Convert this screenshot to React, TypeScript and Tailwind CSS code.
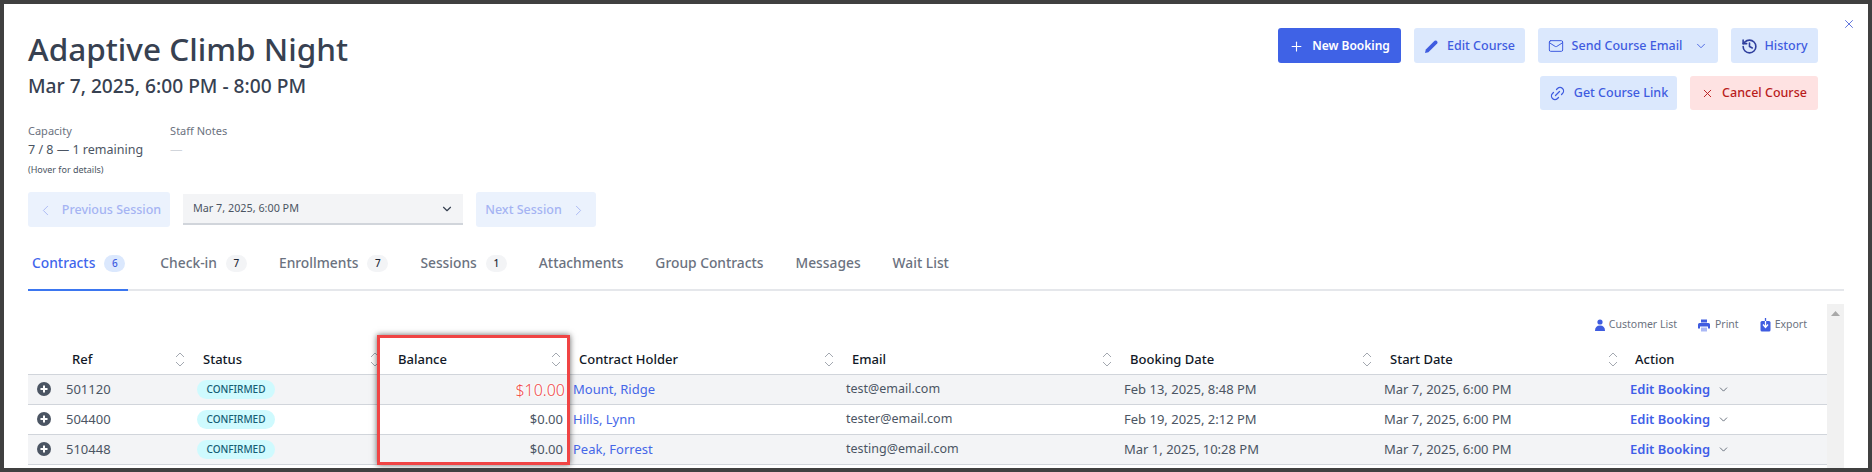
import React from "react";
import { Plus, Mail, ChevronDown, ChevronLeft, ChevronRight, History, Link2, X } from "lucide-react";

const font = { fontFamily: '"Noto Sans", sans-serif' };

function Btn({ w, h = "h-[35px]", className, children }: { w: string; h?: string; className: string; children: React.ReactNode }) {
  return <div className={`${w} ${h} flex items-center justify-center gap-[8px] rounded-[3px] pt-[1px] text-[12.5px] font-medium ${className}`}>{children}</div>;
}

function Sort() {
  return (
    <svg width="10" height="15" viewBox="0 0 10 15" fill="none" stroke="#a3a8b0" strokeWidth="1" className="absolute right-[7px] top-[6px]">
      <path d="M1 5 L5 1 L9 5" />
      <path d="M1 10 L5 14 L9 10" />
    </svg>
  );
}

function PlusDot() {
  return (
    <svg width="14" height="14" viewBox="0 0 14 14">
      <circle cx="7" cy="7" r="7" fill="#4b5563" />
      <path d="M7 3.5 V10.5 M3.5 7 H10.5" stroke="#fff" strokeWidth="2" />
    </svg>
  );
}

const rows = [
  { ref: "501120", bal: "$10.00", name: "Mount, Ridge", email: "test@email.com", book: "Feb 13, 2025, 8:48 PM" },
  { ref: "504400", bal: "$0.00", name: "Hills, Lynn", email: "tester@email.com", book: "Feb 19, 2025, 2:12 PM" },
  { ref: "510448", bal: "$0.00", name: "Peak, Forrest", email: "testing@email.com", book: "Mar 1, 2025, 10:28 PM" },
];

const heads = [
  { t: "Ref", w: "w-[131px]" },
  { t: "Status", w: "w-[195px]" },
  { t: "Balance", w: "w-[181px]" },
  { t: "Contract Holder", w: "w-[273px]" },
  { t: "Email", w: "w-[278px]" },
  { t: "Booking Date", w: "w-[260px]" },
  { t: "Start Date", w: "w-[246px]" },
];

const tabs = [
  { t: "Contracts", b: "6", active: true },
  { t: "Check-in", b: "7" },
  { t: "Enrollments", b: "7" },
  { t: "Sessions", b: "1" },
  { t: "Attachments" },
  { t: "Group Contracts" },
  { t: "Messages" },
  { t: "Wait List" },
];

export default function App() {
  return (
    <div style={font} className="relative h-[472px] w-[1872px] overflow-hidden border-4 border-[#404040] bg-white px-[24px] pt-[24px]">
      <X className="absolute right-[12px] top-[13px] text-[#4a63d8]" size={14} strokeWidth={1.5} />

      <div className="flex justify-between pr-[26px]">
        <div>
          <h1 className="mt-[1px] text-[31.5px] leading-[40px] font-medium text-[#374151]">Adaptive Climb Night</h1>
          <div className="mt-[3px] text-[19.2px] leading-[28px] font-medium text-[#374151]">Mar 7, 2025, 6:00 PM - 8:00 PM</div>
        </div>
        <div className="flex flex-col items-end gap-[13px]">
          <div className="flex gap-[13px]">
            <Btn w="w-[123px]" className="bg-[#3f62e6] !text-[12px] font-semibold text-white"><Plus size={15} strokeWidth={1.75} />New Booking</Btn>
            <Btn w="w-[111px]" className="bg-[#dbe8fd] text-[#3f5ce0]">
              <svg width="15" height="15" viewBox="0 0 15 15" fill="#3f5ce0"><path d="M1 14 L1.8 10.6 L10.6 1.8 Q11.6 1 12.6 1.8 L13.2 2.4 Q14 3.4 13.2 4.4 L4.4 13.2 Z" /></svg>
              Edit Course
            </Btn>
            <Btn w="w-[180px]" className="bg-[#dbe8fd] text-[#3f5ce0]"><Mail size={16} strokeWidth={1.5} />Send Course Email<ChevronDown size={14} className="ml-[4px]" strokeWidth={1.5} /></Btn>
            <Btn w="w-[87px]" className="bg-[#dbe8fd] !gap-[6px] text-[#3f5ce0]"><History size={17} strokeWidth={2.25} className="text-[#2f3f9e]" />History</Btn>
          </div>
          <div className="flex gap-[13px]">
            <Btn w="w-[137px]" h="h-[34px]" className="bg-[#dbe8fd] text-[#3f5ce0]"><Link2 size={17} strokeWidth={1.75} className="-rotate-45" />Get Course Link</Btn>
            <Btn w="w-[128px]" h="h-[34px]" className="bg-[#fee2e2] text-[#b91c1c]"><X size={13} strokeWidth={1.75} />Cancel Course</Btn>
          </div>
        </div>
      </div>

      <div className="mt-[13px] flex gap-[27px]">
        <div>
          <div className="text-[11px] leading-[16px] text-[#6b7280]">Capacity</div>
          <div className="mt-[1px] text-[12.5px] leading-[20px] text-[#4b5563]">7 / 8 — 1 remaining</div>
          <div className="mt-[3px] text-[9px] leading-[14px] text-[#4b5563]">(Hover for details)</div>
        </div>
        <div>
          <div className="text-[11px] leading-[16px] text-[#6b7280]">Staff Notes</div>
          <div className="mt-[1px] text-[12.5px] leading-[20px] text-[#d1d5db]">—</div>
        </div>
      </div>

      <div className="mt-[15px] flex items-center gap-[13px]">
        <Btn w="w-[142px]" className="bg-[#ebf2fd] text-[#a5b4f3]"><ChevronLeft size={17} strokeWidth={1.25} />Previous Session</Btn>
        <div className="flex h-[31px] w-[280px] items-center justify-between border-b-2 border-[#d1d5db] bg-[#f3f4f6] pl-[10px] pr-[9px] text-[10.8px] text-[#4b5563]">
          Mar 7, 2025, 6:00 PM
          <ChevronDown size={14} strokeWidth={2} className="text-[#374151]" />
        </div>
        <Btn w="w-[120px]" className="bg-[#ebf2fd] text-[#a5b4f3]">Next Session<ChevronRight size={17} strokeWidth={1.25} /></Btn>
      </div>

      <div className="mt-[24px] flex h-[40px] gap-[32px] border-b-2 border-[#e5e7eb] text-[13.8px] font-medium">
        {tabs.map((t) => (
          <div key={t.t} className={`-mb-[2px] flex items-center gap-[9px] border-b-2 pb-[14px] ${t.active ? "border-[#3b76f0] pl-[4px] pr-[3px] text-[#3f66ec]" : "border-transparent text-[#6b7280]"}`}>
            {t.t}
            {t.b && (
              <span className={`flex h-[17px] w-[21px] items-center justify-center rounded-full text-[10px] ${t.active ? "bg-[#dbe8fd] text-[#3f5ce0]" : "bg-[#f3f4f6] text-[#1f2937]"}`}>{t.b}</span>
            )}
          </div>
        ))}
      </div>

      <div className="mt-[13px] flex">
        <div className="w-[1799px]">
          <div className="flex h-[42px] items-center justify-end gap-[21px] pr-[20px] text-[10.5px] text-[#6b7280]">
            <div className="flex items-center gap-[4px]">
              <svg width="10" height="13" viewBox="0 0 10 13" fill="#3f5ce0"><circle cx="5" cy="3" r="2.6" /><path d="M0 12 Q0 6.5 5 6.5 Q10 6.5 10 12 Z" /></svg>
              Customer List
            </div>
            <div className="flex items-center gap-[5px]">
              <svg width="12" height="13" viewBox="0 0 12 13" fill="#3f5ce0"><path d="M3 0.5 H9 V3.5 H3 Z" /><path d="M1.5 4 H10.5 Q12 4 12 5.5 V9.5 H10 V7.5 H2 V9.5 H0 V5.5 Q0 4 1.5 4 Z" /><path d="M3 8.5 H9 V12.5 H3 Z" fill="#aab8f5" /></svg>
              Print
            </div>
            <div className="flex items-center gap-[4px]">
              <svg width="11" height="14" viewBox="0 0 11 14"><rect x="0.5" y="3" width="10" height="10.5" rx="1.5" fill="#3f5ce0" /><path d="M5.5 0 V9 M3 6.5 L5.5 9.5 L8 6.5" stroke="#fff" strokeWidth="1.3" fill="none" /><path d="M5.5 0 V3" stroke="#3f5ce0" strokeWidth="1.3" /></svg>
              Export
            </div>
          </div>

          <table className="w-full table-fixed border-collapse text-[13px]">
            <thead>
              <tr className="h-[28px] border-b border-[#d1d5db]">
                <th className="w-[33px]" />
                {heads.map((h) => (
                  <th key={h.t} className={`${h.w} relative pl-[11px] text-left font-medium text-[#111827]`}>
                    {h.t}
                    <Sort />
                  </th>
                ))}
                <th className="pl-[10px] text-left font-medium text-[#111827]">Action</th>
              </tr>
            </thead>
            <tbody>
              {rows.map((r, i) => (
                <tr key={r.ref} className={`h-[30px] border-b border-[#d1d5db] ${i % 2 === 0 ? "bg-[#f3f4f6]" : "bg-white"}`}>
                  <td className="pl-[9px] align-middle"><PlusDot /></td>
                  <td className="pl-[5px] pt-[1px] text-[#4b5563]">{r.ref}</td>
                  <td className="pl-[5px]">
                    <span className="inline-flex h-[19px] w-[78px] items-center justify-center rounded-full bg-[#cffafe] text-[10px] font-medium text-[#155e75]">CONFIRMED</span>
                  </td>
                  <td className="pr-[5px] pt-[1px] text-right text-[#4b5563]">
                    {r.bal === "$10.00" ? (
                      <span className="-mr-[2px] text-[16px] font-light text-[#f04a4a] [text-shadow:0_0_3px_#fff,0_0_3px_#fff,0_0_3px_#fff,0_0_3px_#fff]">{r.bal}</span>
                    ) : r.bal}
                  </td>
                  <td className="pl-[5px] pt-[1px] text-[#4567e8]">{r.name}</td>
                  <td className="pl-[5px] pt-[1px] text-[12.5px] text-[#4b5563]">{r.email}</td>
                  <td className="pl-[5px] pt-[1px] text-[#4b5563]">{r.book}</td>
                  <td className="pl-[5px] pt-[1px] text-[#4b5563]">Mar 7, 2025, 6:00 PM</td>
                  <td className="pl-[5px] pt-[1px]">
                    <span className="inline-flex items-center gap-[7px] font-semibold text-[#3f5ee8]">Edit Booking<ChevronDown size={13} className="text-[#4b5563]" strokeWidth={1.5} /></span>
                  </td>
                </tr>
              ))}
            </tbody>
          </table>
        </div>
        <div className="flex h-[170px] w-[17px] justify-center bg-[#f1f1f1] pt-[7px]">
          <svg width="9" height="5" viewBox="0 0 9 5" fill="#a8a8a8"><path d="M4.5 0 L9 5 H0 Z" /></svg>
        </div>
      </div>

      <div className="pointer-events-none absolute left-[373px] top-[331px] h-[130px] w-[193px] border-[3px] border-[#f04444] shadow-[0_0_6px_rgba(0,0,0,0.6)]" />
    </div>
  );
}
